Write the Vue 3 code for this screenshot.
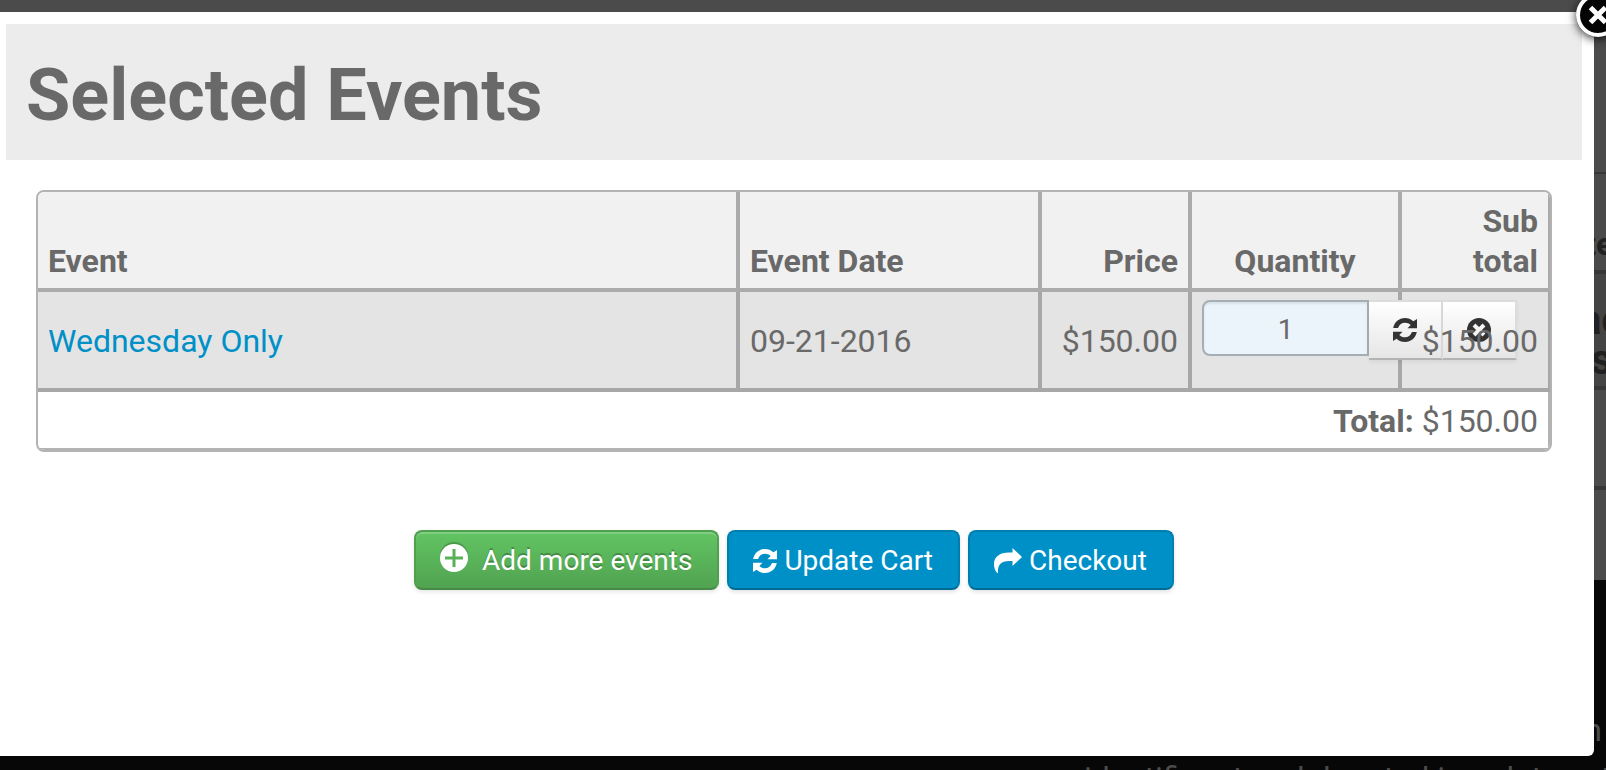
<template>
  <div class="page">
    <div class="backdrop" aria-hidden="true">
      <div class="under-table">
        <div class="under-row under-row--top"></div>
        <div class="under-row under-row--head">ate</div>
        <div class="under-row under-row--name">iac<br />es</div>
        <div class="under-row under-row--total"></div>
      </div>
      <p class="under-text under-text--side">in</p>
      <p class="under-text under-text--foot">identifiers to ad donated in a data set</p>
    </div>

    <main class="modal" role="dialog" aria-modal="true" aria-labelledby="cart-title">
      <h1 id="cart-title" class="title">Selected Events</h1>

      <form class="cart" @submit.prevent>
        <table class="table">
          <colgroup>
            <col />
            <col class="col-date" />
            <col class="col-price" />
            <col class="col-qty" />
            <col class="col-sub" />
          </colgroup>
          <thead>
            <tr>
              <th scope="col">Event</th>
              <th scope="col">Event Date</th>
              <th scope="col" class="num">Price</th>
              <th scope="col" class="mid">Quantity</th>
              <th scope="col" class="num">Sub total</th>
            </tr>
          </thead>
          <tbody>
            <tr v-for="item in items" :key="item.id">
              <td><a class="link" href="#">{{ item.name }}</a></td>
              <td>{{ item.date }}</td>
              <td class="num">{{ money(item.price) }}</td>
              <td class="qty-cell">
                <div class="qty">
                  <input v-model.number="item.quantity" class="qty-input" type="text" :aria-label="`Quantity for ${item.name}`" />
                  <button class="qty-btn" type="button" aria-label="Update quantity">
                    <svg class="icon" viewBox="0 0 24 24">
                      <path :d="refreshTop" />
                      <path :d="refreshTop" transform="rotate(180 12 12)" />
                    </svg>
                  </button>
                  <button class="qty-btn" type="button" aria-label="Remove">
                    <svg class="icon" viewBox="0 0 24 24">
                      <circle cx="12" cy="12" r="12" />
                      <path class="cross" d="M7 7l10 10M17 7L7 17" />
                    </svg>
                  </button>
                </div>
              </td>
              <td class="num">{{ money(item.price * item.quantity) }}</td>
            </tr>
          </tbody>
          <tfoot>
            <tr>
              <td colspan="5" class="num"><strong>Total:</strong> {{ money(total) }}</td>
            </tr>
          </tfoot>
        </table>

        <div class="actions">
          <button class="btn btn--add" type="button">
            <svg class="icon icon--plus" viewBox="0 0 28 28">
              <circle cx="14" cy="14" r="14" />
              <path class="plus" d="M14 5v18M5 14h18" />
            </svg>
            Add more events
          </button>
          <button class="btn" type="submit">
            <svg class="icon" viewBox="0 0 24 24">
              <path :d="refreshTop" />
              <path :d="refreshTop" transform="rotate(180 12 12)" />
            </svg>
            Update Cart
          </button>
          <button class="btn" type="button">
            <svg class="icon icon--share" viewBox="0 0 28 25">
              <path d="M28 9L18.500 0v4.500H15C5.500 4.500 0 9 0 16c0 4 1.200 6.800 3.200 9H4c-.6-7.500 2.500-12 11-12h3.500v5z" />
            </svg>
            Checkout
          </button>
        </div>
      </form>
    </main>

    <button class="close" type="button" aria-label="Close">
      <svg class="close-icon" viewBox="0 0 44 44">
        <circle cx="22" cy="22" r="20" />
        <path d="M14.500 14.500l15 15M29.500 14.500l-15 15" />
      </svg>
    </button>
  </div>
</template>

<script setup>
import { computed, ref } from 'vue'

// upper half of the refresh icon, the lower half is the same path turned round
const refreshTop = 'M.2 10C1.300 4.200 6 0 12 0c3.200 0 6.100 1.200 8.400 3.300L24 1v9.200h-9.500l3.200-3.200C16.200 5.500 14.200 4.700 12 4.700 8.900 4.700 6.300 6.500 5 10z'

const items = ref([
  { id: 1, name: 'Wednesday Only', date: '09-21-2016', price: 150, quantity: 1 }
])

const total = computed(() => items.value.reduce((sum, i) => sum + i.price * i.quantity, 0))

function money(value) {
  return `$${Number(value || 0).toFixed(2)}`
}
</script>

<style>
body {
  margin: 0;
  background: #070707;
}
</style>

<style scoped>
.page {
  position: relative;
  display: flex;
  flex-direction: column;
  box-sizing: border-box;
  min-height: 100vh;
  padding: 12px 12px 14px 0;
  overflow: hidden;
  background: #070707;
  color: #696969;
  font-family: Roboto, "Liberation Sans", sans-serif;
  font-size: 32px;
  line-height: 40px;
}

.backdrop {
  position: absolute;
  inset: 0;
  overflow: hidden;
}

.under-table {
  display: flex;
  flex-direction: column;
  align-items: flex-end;
  height: 580px;
  background: #4b4b4b;
}

.under-row {
  box-sizing: border-box;
  width: 38px;
  border-bottom: 4px solid #373737;
  background: #474747;
  color: #212121;
  font-weight: 700;
  white-space: nowrap;
  overflow: hidden;
}

.under-row--top {
  height: 174px;
  border-bottom-width: 2px;
  background: #4b4b4b;
}

.under-row--head {
  height: 100px;
  padding-top: 50px;
  background: #4a4a4a;
}

.under-row--name {
  height: 116px;
  padding-top: 26px;
  font-size: 42px;
  background: #444;
}

.under-row--total {
  height: 100px;
  background: #4b4b4b;
}

.under-text {
  position: absolute;
  margin: 0;
  color: #4b4b4b;
  white-space: nowrap;
}

.under-text--side {
  right: 4px;
  bottom: 20px;
}

.under-text--foot {
  right: 0;
  bottom: -28px;
  width: 522px;
}

.modal {
  position: relative;
  flex: 1;
  padding: 12px 12px 12px 6px;
  border-radius: 0 0 6px 0;
  background: #fff;
}

.title {
  margin: 0;
  padding: 32px 20px 24px;
  background: #ececec;
  font-size: 72px;
  font-weight: 700;
  line-height: 80px;
}

.cart {
  padding: 30px;
}

.table {
  width: 100%;
  table-layout: fixed;
  border: 2px solid #b3b3b3;
  border-radius: 8px;
  border-collapse: separate;
  border-spacing: 0;
  overflow: hidden;
}

.col-date {
  width: 302px;
}

.col-price {
  width: 150px;
}

.col-qty {
  width: 210px;
}

.col-sub {
  width: 148px;
}

th,
td {
  padding: 9px 10px 7px;
  border-right: 4px solid #ababab;
  border-bottom: 4px solid #ababab;
  text-align: left;
}

th:last-child,
td:last-child {
  border-right-width: 2px;
}

th {
  background: #f1f1f1;
  font-weight: 700;
  vertical-align: bottom;
}

tbody td {
  border-color: #a7a7a7;
  background: #e4e4e4;
}

tfoot td {
  border-color: #b3b3b3;
  border-bottom-width: 2px;
}

.num {
  text-align: right;
}

.mid {
  text-align: center;
}

.link {
  color: #0090c8;
  text-decoration: none;
}

.qty-cell {
  padding: 8px 10px;
}

.qty {
  display: flex;
  align-items: flex-start;
  height: 80px;
}

.qty-input {
  flex: none;
  box-sizing: border-box;
  width: 167px;
  height: 56px;
  margin: 0;
  padding: 2px 10px 0;
  border: 2px solid #a5afb3;
  border-radius: 8px 0 0 8px;
  background: #ebf4fb;
  box-shadow: inset 0 2px 2px rgba(0, 0, 0, 0.08);
  color: #696969;
  font-family: inherit;
  font-size: 28px;
  text-align: center;
}

.qty-btn {
  flex: none;
  display: flex;
  align-items: center;
  justify-content: center;
  box-sizing: border-box;
  width: 74px;
  height: 60px;
  margin: 0;
  padding: 0;
  border: 2px solid #dcdcdc;
  border-bottom-color: #b3b3b3;
  border-left-width: 0;
  background: linear-gradient(#fff, #e6e6e6);
  box-shadow: 0 2px 4px rgba(0, 0, 0, 0.06);
  color: #333;
  cursor: pointer;
}

.icon {
  width: 24px;
  height: 24px;
  fill: currentColor;
}

.cross {
  stroke: #f4f4f4;
  stroke-width: 4;
}

.actions {
  display: flex;
  justify-content: center;
  gap: 8px;
  padding-top: 78px;
}

.btn {
  display: flex;
  align-items: center;
  gap: 7px;
  box-sizing: border-box;
  height: 60px;
  margin: 0;
  padding: 1px 25px 0 24px;
  border: 2px solid #007fae;
  border-bottom-color: #006b96;
  border-radius: 8px;
  background: #0090c8;
  box-shadow: 0 2px 4px rgba(0, 0, 0, 0.12);
  color: #fff;
  font-family: inherit;
  font-size: 28px;
  line-height: 40px;
  cursor: pointer;
}

.btn--add {
  gap: 14px;
  border-color: #4fa04f;
  border-bottom-color: #458a45;
  background: linear-gradient(#62c462, #51a351);
  box-shadow: inset 0 2px 0 rgba(255, 255, 255, 0.2), 0 2px 4px rgba(0, 0, 0, 0.1);
  text-shadow: 0 -2px 0 rgba(0, 0, 0, 0.25);
}

.icon--plus {
  width: 28px;
  height: 28px;
  margin-bottom: 5px;
  filter: drop-shadow(0 -2px 0 rgba(0, 0, 0, 0.2));
}

.plus {
  stroke: #58b058;
  stroke-width: 3;
}

.icon--share {
  width: 28px;
  height: 25px;
}

.close {
  position: absolute;
  top: -7px;
  right: -14px;
  width: 44px;
  height: 44px;
  margin: 0;
  padding: 0;
  border: 0;
  border-radius: 50%;
  background: #000;
  box-shadow: 0 2px 10px rgba(0, 0, 0, 0.8);
  cursor: pointer;
}

.close-icon {
  display: block;
  width: 44px;
  height: 44px;
  fill: #050505;
  stroke: #fff;
  stroke-width: 4;
}

.close-icon path {
  stroke-width: 5;
}
</style>
